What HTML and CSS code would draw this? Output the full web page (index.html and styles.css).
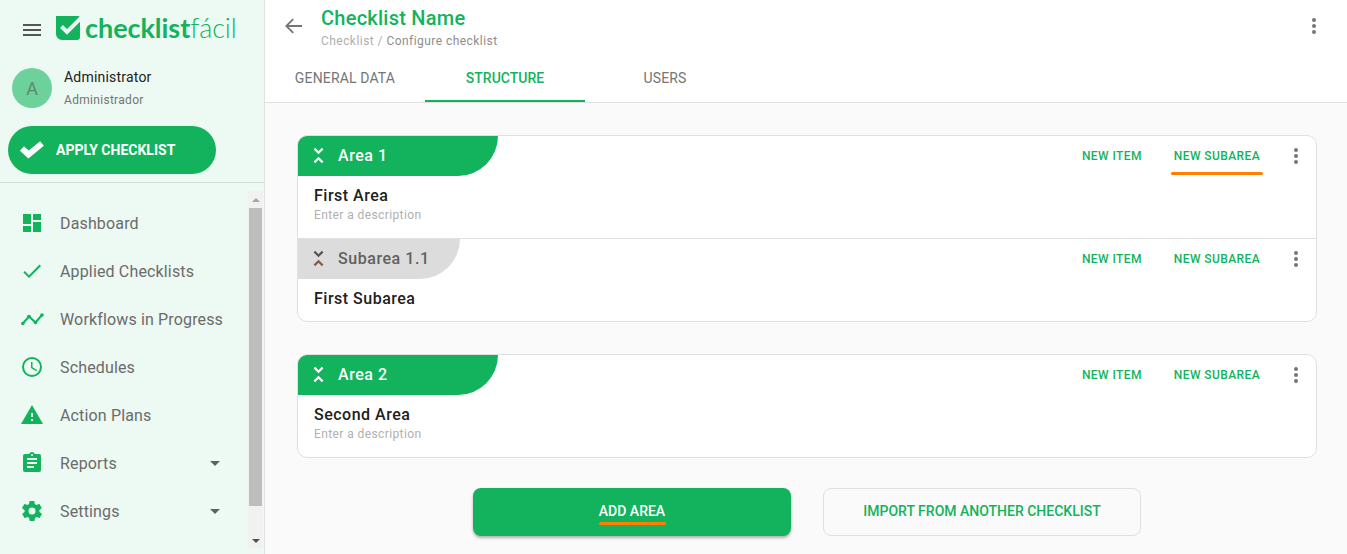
FILE: index.html
```html
<!DOCTYPE html>
<html lang="en">
<head>
<meta charset="utf-8">
<title>Checklist Name</title>
<link rel="stylesheet" href="styles.css">
</head>
<body>
<div class="app">
  <aside class="sidebar">
    <div class="brand">
      <svg class="menu-icon" viewBox="0 0 18 12"><path d="M0 0h18v2H0zM0 5h18v2H0zM0 10h18v2H0z"/></svg>
      <svg class="logo-mark" viewBox="0 0 24 24"><path d="M0 0h22a2 2 0 0 1 2 2v19a3 3 0 0 1-3 3H6a6 6 0 0 1-6-6z" fill="#12b35c"/><path d="M5.500 10.500L11 16 25 2" fill="none" stroke="#edf9f3" stroke-width="4"/></svg>
      <span class="logo-text"><span class="logo-bold">checklist</span><span class="logo-light">fácil</span></span>
    </div>
    <div class="user">
      <div class="avatar">A</div>
      <div class="user-text">
        <div class="user-name">Administrator</div>
        <div class="user-role">Administrador</div>
      </div>
    </div>
    <button class="apply">
      <svg viewBox="0 0 24 20"><path d="M2.500 8.500L9 14.500 22.500 3.500" fill="none" stroke="#fff" stroke-width="6"/></svg>
      <span>APPLY CHECKLIST</span>
    </button>
    <div class="nav-wrap">
      <nav class="nav">
        <a class="nav-item"><svg viewBox="0 0 24 24"><path d="M3 13h8V3H3zm0 8h8v-6H3zm10 0h8V11h-8zm0-18v6h8V3z"/></svg><span>Dashboard</span></a>
        <a class="nav-item"><svg viewBox="0 0 24 24"><path d="M9 16.200L4.800 12l-1.400 1.400L9 19 21 7l-1.400-1.400z"/></svg><span>Applied Checklists</span></a>
        <a class="nav-item"><svg viewBox="0 0 24 24"><path d="M2.800 16.500L9 9.500l6.500 6L22 8" fill="none" stroke="#12b35c" stroke-width="2"/><circle cx="2.800" cy="16.500" r="1.800"/><circle cx="9" cy="9.500" r="1.800"/><circle cx="15.500" cy="15.500" r="1.800"/><circle cx="22" cy="8" r="1.800"/></svg><span>Workflows in Progress</span></a>
        <a class="nav-item"><svg viewBox="0 0 24 24"><path d="M12 2a10 10 0 1 0 0 20 10 10 0 0 0 0-20zm0 18a8 8 0 1 1 0-16 8 8 0 0 1 0 16zm.5-13H11v6l5.200 3.200.8-1.300-4.500-2.700z"/></svg><span>Schedules</span></a>
        <a class="nav-item"><svg viewBox="0 0 24 24"><path d="M1 21h22L12 2zm12-3h-2v-2h2zm0-4h-2v-4h2z"/></svg><span>Action Plans</span></a>
        <a class="nav-item"><svg viewBox="0 0 24 24"><path d="M19 3h-4.200A3 3 0 0 0 12 1a3 3 0 0 0-2.800 2H5a2 2 0 0 0-2 2v14c0 1.100.9 2 2 2h14a2 2 0 0 0 2-2V5a2 2 0 0 0-2-2zm-7 0a1 1 0 1 1 0 2 1 1 0 0 1 0-2zm2 14H7v-2h7zm3-4H7v-2h10zm0-4H7V7h10z"/></svg><span>Reports</span><i class="caret"></i></a>
        <a class="nav-item"><svg viewBox="0 0 24 24"><path d="M19.400 13a7.500 7.500 0 0 0 0-2l2.100-1.600a.5.5 0 0 0 .1-.6l-2-3.500a.5.5 0 0 0-.6-.2l-2.500 1a7.300 7.300 0 0 0-1.700-1l-.4-2.700a.5.500 0 0 0-.5-.4h-4a.5.500 0 0 0-.5.400l-.4 2.700a7.700 7.700 0 0 0-1.700 1l-2.500-1a.5.5 0 0 0-.6.200l-2 3.500a.5.500 0 0 0 .1.600L4.600 11a7.900 7.900 0 0 0 0 2l-2.100 1.600a.5.500 0 0 0-.1.600l2 3.500c.1.200.4.300.6.200l2.500-1c.5.400 1.100.7 1.700 1l.4 2.700c0 .2.200.4.500.4h4c.3 0 .5-.2.500-.4l.4-2.700a7.300 7.300 0 0 0 1.700-1l2.500 1c.2.100.5 0 .6-.2l2-3.500a.5.500 0 0 0-.1-.6zM12 15.500a3.500 3.500 0 1 1 0-7 3.500 3.500 0 0 1 0 7z"/></svg><span>Settings</span><i class="caret"></i></a>
      </nav>
      <div class="scrollbar">
        <i class="arrow-up"></i>
        <div class="thumb"></div>
        <i class="arrow-down"></i>
      </div>
    </div>
  </aside>
  <main class="main">
    <header class="header">
      <div class="title-row">
        <svg class="back" viewBox="0 0 18 18"><path d="M18 8H3.800l5.600-5.600L8 1 0 9l8 8 1.400-1.400L3.800 10H18z"/></svg>
        <div class="title-block">
          <h1>Checklist Name</h1>
          <div class="crumbs">Checklist / <span>Configure checklist</span></div>
        </div>
        <svg class="dots header-dots" viewBox="0 0 4 16"><circle cx="2" cy="2" r="2"/><circle cx="2" cy="8" r="2"/><circle cx="2" cy="14" r="2"/></svg>
      </div>
      <div class="tabs">
        <div class="tab">GENERAL DATA</div>
        <div class="tab active">STRUCTURE</div>
        <div class="tab">USERS</div>
      </div>
    </header>
    <div class="content">
      <section class="card">
        <div class="block">
          <div class="block-head">
            <div class="pill"><svg class="collapse" viewBox="0 0 12 18"><path d="M1.500 1.500L6 6l4.500-4.500M1.500 16.500L6 12l4.500 4.500" fill="none" stroke="#fff" stroke-width="2.400"/></svg><span>Area 1</span></div>
            <div class="actions">
              <a class="action">NEW ITEM</a>
              <a class="action focus">NEW SUBAREA</a>
              <svg class="dots" viewBox="0 0 4 16"><circle cx="2" cy="2" r="2"/><circle cx="2" cy="8" r="2"/><circle cx="2" cy="14" r="2"/></svg>
            </div>
          </div>
          <div class="block-body">
            <div class="block-title">First Area</div>
            <div class="block-desc">Enter a description</div>
          </div>
        </div>
        <div class="block sub">
          <div class="block-head">
            <div class="pill grey"><svg class="collapse" viewBox="0 0 12 18"><path d="M1.500 1.500L6 6l4.500-4.500" fill="none" stroke="#555" stroke-width="2.400"/><path d="M1.500 16.500L6 12l4.500 4.500" fill="none" stroke="#8a5a44" stroke-width="2.400"/></svg><span>Subarea 1.1</span></div>
            <div class="actions">
              <a class="action">NEW ITEM</a>
              <a class="action">NEW SUBAREA</a>
              <svg class="dots" viewBox="0 0 4 16"><circle cx="2" cy="2" r="2"/><circle cx="2" cy="8" r="2"/><circle cx="2" cy="14" r="2"/></svg>
            </div>
          </div>
          <div class="block-body">
            <div class="block-title">First Subarea</div>
          </div>
        </div>
      </section>
      <section class="card">
        <div class="block">
          <div class="block-head">
            <div class="pill"><svg class="collapse" viewBox="0 0 12 18"><path d="M1.500 1.500L6 6l4.500-4.500M1.500 16.500L6 12l4.500 4.500" fill="none" stroke="#fff" stroke-width="2.400"/></svg><span>Area 2</span></div>
            <div class="actions">
              <a class="action">NEW ITEM</a>
              <a class="action">NEW SUBAREA</a>
              <svg class="dots" viewBox="0 0 4 16"><circle cx="2" cy="2" r="2"/><circle cx="2" cy="8" r="2"/><circle cx="2" cy="14" r="2"/></svg>
            </div>
          </div>
          <div class="block-body">
            <div class="block-title">Second Area</div>
            <div class="block-desc">Enter a description</div>
          </div>
        </div>
      </section>
      <div class="buttons">
        <button class="btn primary"><span>ADD AREA</span></button>
        <button class="btn outline">IMPORT FROM ANOTHER CHECKLIST</button>
      </div>
    </div>
  </main>
</div>
</body>
</html>
```

FILE: styles.css
```css
* { box-sizing: border-box; }
html, body { margin: 0; height: 100%; overflow: hidden; }
body { font-family: Roboto, "Liberation Sans", sans-serif; color: #212121; }
.app { display: flex; height: 554px; }

.sidebar { width: 265px; flex: none; background: #edf9f3; border-right: 1px solid #dfe3e1; display: flex; flex-direction: column; }
.brand { height: 56px; display: flex; align-items: center; padding-left: 23px; }
.menu-icon { width: 18px; height: 12px; fill: #555; margin-top: 4px; flex: none; }
.logo-mark { width: 24px; height: 24px; margin-left: 15px; flex: none; }
.logo-text { font-family: Lato, Roboto, sans-serif; font-size: 27px; color: #12b35c; margin-left: 5px; letter-spacing: -0.05px; line-height: 30px; }
.logo-bold { font-weight: 700; }
.logo-light { font-weight: 300; }

.user { display: flex; padding: 12px 0 0 12px; height: 70px; }
.avatar { width: 40px; height: 40px; border-radius: 50%; background: #6cd19a; color: #5a8a70; font-size: 18px; display: flex; align-items: center; justify-content: center; flex: none; }
.user-text { margin-left: 12px; }
.user-name { font-size: 14px; line-height: 18px; letter-spacing: .2px; }
.user-role { font-size: 12px; line-height: 16px; margin-top: 6px; color: #757575; letter-spacing: .3px; }

.apply { width: 208px; height: 48px; margin-left: 8px; border: 0; border-radius: 24px; background: #12b35c; color: #fff; font: 700 14px Roboto, sans-serif; letter-spacing: 0; display: flex; align-items: center; padding: 0 0 0 11px; flex: none; }
.apply svg { width: 25px; height: 20px; margin-right: 12px; }

.nav-wrap { margin-top: 8px; border-top: 1px solid #d5ddd9; display: flex; flex: 1; min-height: 0; padding-top: 8px; }
.nav { flex: 1; padding-top: 8px; }
.nav-item { height: 48px; display: flex; align-items: center; padding-left: 20px; color: #6b6b6b; font-size: 16px; letter-spacing: .15px; }
.nav-item svg { width: 24px; height: 24px; fill: #12b35c; flex: none; margin-right: 16px; }
.caret { width: 0; height: 0; border: 5px solid transparent; border-top-color: #616161; border-bottom: 0; margin-left: auto; margin-right: 28px; }

.scrollbar { width: 15px; flex: none; background: #f1f1f1; margin-right: 1px; margin-bottom: 6px; display: flex; flex-direction: column; align-items: center; }
.thumb { width: 13px; height: 298px; background: #bdbdbd; margin-top: 6px; }
.arrow-up, .arrow-down { width: 0; height: 0; border: 4px solid transparent; }
.arrow-up { border-bottom: 4px solid #a3a3a3; border-top: 0; margin-top: 7px; }
.arrow-down { border-top: 4px solid #505050; border-bottom: 0; margin-top: auto; margin-bottom: 5px; }

.main { flex: 1; background: #fafafa; min-width: 0; }
.header { height: 103px; background: #fff; border-bottom: 1px solid #e0e0e0; }
.title-row { display: flex; height: 54px; padding: 7px 0 0 20px; }
.back { width: 17px; height: 18px; fill: #757575; margin-top: 10px; flex: none; }
.title-block { margin-left: 19px; flex: 1; }
h1 { margin: 0; font-size: 20px; line-height: 23px; font-weight: 500; color: #12b35c; letter-spacing: .25px; }
.crumbs { font-size: 12px; line-height: 14px; margin-top: 4px; color: #aeaeae; letter-spacing: .45px; }
.crumbs span { color: #8d8d8d; }
.header-dots { margin: 11px 31px 0 0; }
.dots { width: 4px; height: 16px; fill: #757575; flex: none; }
.tabs { display: flex; height: 48px; }
.tab { width: 160px; display: flex; align-items: center; justify-content: center; font-size: 14px; color: #757575; height: 48px; letter-spacing: .15px; }
.tab.active { color: #12b35c; font-weight: 500; letter-spacing: 0; padding-top: 2px; border-bottom: 2px solid #12b35c; }

.content { padding: 32px 30px 0 32px; }
.card { background: #fff; border: 1px solid #e0e0e0; border-radius: 10px; margin-bottom: 32px; overflow: hidden; }
.block.sub { border-top: 1px solid #e0e0e0; }
.block.sub .block-body { padding-bottom: 12px; }
.block-head { display: flex; justify-content: space-between; height: 40px; }
.pill { width: 200px; height: 40px; background: #12b35c; color: #fff; border-bottom-right-radius: 40px; display: flex; align-items: center; padding: 0 0 2px 15px; font-size: 16px; font-weight: 500; letter-spacing: .55px; }
.pill.grey { width: 162px; background: #dcdcdc; color: #616161; }
.collapse { width: 11px; height: 17px; margin-right: 14px; flex: none; }
.actions { display: flex; align-items: center; padding-right: 18px; }
.action { font-size: 12px; font-weight: 500; color: #12b35c; letter-spacing: .4px; margin-right: 32px; position: relative; }
.action:nth-child(2) { margin-right: 34px; }
.action.focus::after { content: ""; position: absolute; left: -3px; right: -3px; bottom: -12px; height: 3px; border-radius: 2px; background: #ff8000; }
.block-body { padding: 10px 16px 14px; }
.block-title { font-size: 16px; font-weight: 500; line-height: 20px; letter-spacing: .5px; color: #212121; }
.block-desc { font-size: 12px; line-height: 16px; margin-top: 1px; margin-bottom: 1px; color: #b0b0b0; letter-spacing: .4px; }

.buttons { display: flex; justify-content: center; gap: 32px; margin-top: -2px; }
.btn { width: 318px; height: 48px; border-radius: 8px; font: 500 14px Roboto, sans-serif; padding: 0 0 2px; }
.btn.primary { background: #12b35c; color: #fff; border: 0; box-shadow: 0 2px 3px rgba(0,0,0,.3); }
.btn.primary span { display: inline-block; position: relative; }
.btn.primary span::after { content: ""; position: absolute; left: 0; right: -1px; bottom: -6px; height: 3px; border-radius: 2px; background: #ff8000; }
.btn.outline { background: transparent; color: #12b35c; border: 1px solid #e0e0e0; }
```
